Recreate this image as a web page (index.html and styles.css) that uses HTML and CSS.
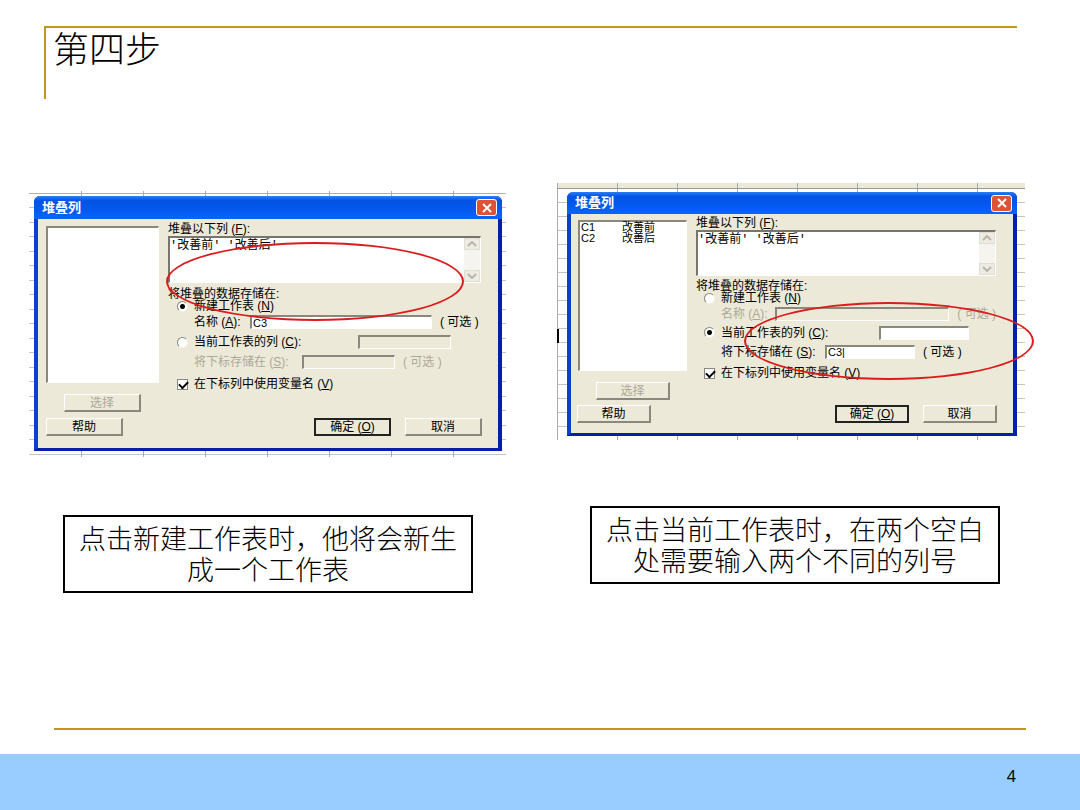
FILE: index.html
```html
<!doctype html>
<html lang="zh-CN">
<head>
    <meta charset="utf-8">
    <meta name="viewport" content="width=device-width, initial-scale=1.0">
    <title>第四步</title>
    <link rel="stylesheet" href="styles.css">
</head>
<body>

<div class="slide">
    <header class="slide-header">
        <h1>第四步</h1>
    </header>

    <main class="steps">
        <section class="step step-new">
            <div class="sheet">
                <form class="dialog">
                    <div class="titlebar">
                        <h2>堆叠列</h2>
                        <button type="button" class="close" aria-label="关闭">
                            <svg viewBox="0 0 12 12"><path d="M2 2l8 8M10 2l-8 8"/></svg>
                        </button>
                    </div>
                    <div class="body">
                        <div class="side">
                            <ul class="columns"></ul>
                            <button type="button" class="btn select" disabled>选择</button>
                        </div>
                        <div class="fields">
                            <label for="stack1">堆叠以下列 (<u>F</u>):</label>
                            <div class="memo">
                                <textarea id="stack1">'改善前' '改善后'</textarea>
                                <div class="scroll">
                                    <svg viewBox="0 0 10 6"><path d="M1 5l4-4 4 4"/></svg>
                                    <svg viewBox="0 0 10 6"><path d="M1 1l4 4 4-4"/></svg>
                                </div>
                            </div>
                            <p class="group">将堆叠的数据存储在:</p>
                            <div class="row row-first">
                                <input type="radio" name="target1" id="new1" checked>
                                <label for="new1">新建工作表 (<u>N</u>)</label>
                            </div>
                            <div class="row">
                                <label class="short" for="name1">名称 (<u>A</u>):</label>
                                <input type="text" class="wide" id="name1" value="C3">
                                <span class="optional">( 可选 )</span>
                            </div>
                            <div class="row">
                                <input type="radio" name="target1" id="current1">
                                <label class="long" for="current1">当前工作表的列 (<u>C</u>):</label>
                                <input type="text" aria-label="当前工作表的列" disabled>
                            </div>
                            <div class="row off">
                                <label class="medium" for="sub1">将下标存储在 (<u>S</u>):</label>
                                <input type="text" id="sub1" disabled>
                                <span class="optional">( 可选 )</span>
                            </div>
                            <div class="row row-last">
                                <input type="checkbox" id="vars1" checked>
                                <label for="vars1">在下标列中使用变量名 (<u>V</u>)</label>
                            </div>
                        </div>
                    </div>
                    <div class="actions">
                        <button type="button" class="btn help">帮助</button>
                        <button type="button" class="btn ok">确定 (<u>O</u>)</button>
                        <button type="button" class="btn">取消</button>
                    </div>
                </form>
                <div class="ring"></div>
            </div>
            <p class="caption">点击新建工作表时，他将会新生成一个工作表</p>
        </section>

        <section class="step step-current">
            <div class="sheet">
                <div class="cell"></div>
                <form class="dialog">
                    <div class="titlebar">
                        <h2>堆叠列</h2>
                        <button type="button" class="close" aria-label="关闭">
                            <svg viewBox="0 0 12 12"><path d="M2 2l8 8M10 2l-8 8"/></svg>
                        </button>
                    </div>
                    <div class="body">
                        <div class="side">
                            <ul class="columns">
                                <li><span>C1</span><span>改善前</span></li>
                                <li><span>C2</span><span>改善后</span></li>
                            </ul>
                            <button type="button" class="btn select" disabled>选择</button>
                        </div>
                        <div class="fields">
                            <label for="stack2">堆叠以下列 (<u>F</u>):</label>
                            <div class="memo">
                                <textarea id="stack2">'改善前' '改善后'</textarea>
                                <div class="scroll">
                                    <svg viewBox="0 0 10 6"><path d="M1 5l4-4 4 4"/></svg>
                                    <svg viewBox="0 0 10 6"><path d="M1 1l4 4 4-4"/></svg>
                                </div>
                            </div>
                            <p class="group">将堆叠的数据存储在:</p>
                            <div class="row row-first">
                                <input type="radio" name="target2" id="new2">
                                <label for="new2">新建工作表 (<u>N</u>)</label>
                            </div>
                            <div class="row off">
                                <label class="short" for="name2">名称 (<u>A</u>):</label>
                                <input type="text" class="wide" id="name2" disabled>
                                <span class="optional">( 可选 )</span>
                            </div>
                            <div class="row">
                                <input type="radio" name="target2" id="current2" checked>
                                <label class="long" for="current2">当前工作表的列 (<u>C</u>):</label>
                                <input type="text" aria-label="当前工作表的列">
                            </div>
                            <div class="row">
                                <label class="medium" for="sub2">将下标存储在 (<u>S</u>):</label>
                                <input type="text" id="sub2" value="C3|">
                                <span class="optional">( 可选 )</span>
                            </div>
                            <div class="row row-last">
                                <input type="checkbox" id="vars2" checked>
                                <label for="vars2">在下标列中使用变量名 (<u>V</u>)</label>
                            </div>
                        </div>
                    </div>
                    <div class="actions">
                        <button type="button" class="btn help">帮助</button>
                        <button type="button" class="btn ok">确定 (<u>O</u>)</button>
                        <button type="button" class="btn">取消</button>
                    </div>
                </form>
                <div class="ring"></div>
            </div>
            <p class="caption">点击当前工作表时，在两个空白处需要输入两个不同的列号</p>
        </section>
    </main>

    <hr class="rule">
    <footer class="slide-footer">4</footer>
</div>

</body>
</html>
```
FILE: styles.css
```css
* {
    box-sizing: border-box;
}

body {
    margin: 0;
    background: #fff;
    color: #000;
    font-family: "Liberation Sans", "Noto Sans CJK SC", sans-serif;
}

h1, h2, p, ul {
    margin: 0;
    padding: 0;
    font-weight: normal;
    list-style: none;
}

.slide {
    display: flex;
    flex-direction: column;
    min-height: 100vh;
}

.slide-header {
    height: 73px;
    margin: 26px 63px 0 44px;
    padding-left: 7px;
    border-top: 2px solid #c0981c;
    border-left: 2px solid #c0981c;
}

.slide-header h1 {
    font-size: 36px;
    font-weight: 300;
    line-height: 46px;
}

/* the two steps */
.steps {
    flex: 1;
    display: grid;
    grid-template-columns: 477fr 468fr;
    gap: 51px;
    align-items: start;
    padding: 84px 55px 0 29px;
}

.step {
    min-width: 0;
}

.step-new {
    --row: 20px;
    --head: 23px;
    --memo: 47px;
    --indent: 26px;
    --small: 93px;
    margin-top: 8px;
}

.step-current {
    --row: 19px;
    --head: 22px;
    --memo: 46px;
    --indent: 25px;
    --small: 90px;
}

.sheet {
    position: relative;
    padding: 5px 4px 6px 5px;
    background:
        linear-gradient(#b0b0a8, #b0b0a8) 0 2px / 100% 1px no-repeat,
        repeating-linear-gradient(90deg, transparent 0 52px, #aaa 52px 53px, transparent 53px 62px),
        repeating-linear-gradient(transparent 0 2px, #c4c4c4 2px 3px, transparent 3px 16px, #c4c4c4 16px 17px, transparent 17px 29px);
}

.step-current .sheet {
    padding: 9px 8px 4px 10px;
    background:
        linear-gradient(#999, #999) 0 5px / 100% 1px no-repeat,
        repeating-linear-gradient(90deg, #aaa 0 1px, transparent 1px 60px),
        linear-gradient(#ece9d8, #ece9d8) 0 0 / 100% 5px no-repeat,
        repeating-linear-gradient(transparent 0 5px, #c4c4c4 5px 6px, transparent 6px 14px);
}

.cell {
    position: absolute;
    left: 0;
    top: 146px;
    width: 2px;
    height: 14px;
    background: #000;
}

.ring {
    position: absolute;
    left: 137px;
    top: 51px;
    width: 298px;
    height: 79px;
    border: 2px solid #dc1c1c;
    border-radius: 50%;
    pointer-events: none;
}

.step-current .ring {
    left: 187px;
    top: 119px;
    width: 290px;
    height: 78px;
}

/* dialog */
.dialog {
    border: 4px solid #0c3fd0;
    border-top: 0;
    border-bottom-width: 3px;
    border-right-color: #0420a8;
    border-bottom-color: #0420a8;
    border-radius: 6px 6px 0 0;
    background: #ece9d8;
    font-size: 12px;
    line-height: 12px;
}

.titlebar {
    display: flex;
    align-items: center;
    justify-content: space-between;
    height: var(--head);
    margin: 0 -4px;
    padding: 0 5px 0 8px;
    border-radius: 6px 6px 0 0;
    background: linear-gradient(#2b7ff5, #0353e4 20%, #0458ee 60%, #0666ff);
}

.titlebar h2 {
    color: #fff;
    font-size: 13px;
    font-weight: bold;
    line-height: 16px;
}

.close {
    width: 21px;
    height: 17px;
    padding: 0;
    border: 1px solid #fff;
    border-radius: 3px;
    background: #dd5334;
    line-height: 0;
}

.close svg {
    width: 12px;
    height: 12px;
    fill: none;
    stroke: #fff;
    stroke-width: 2;
}

.body {
    display: flex;
    gap: 9px;
    padding: 4px 17px 0 8px;
}

.side {
    width: 113px;
    padding-top: 3px;
}

.columns {
    height: 157px;
    border: 1px solid #fff;
    border-top: 2px solid #8a887c;
    border-left: 2px solid #8a887c;
    background: #fff;
    font-size: 11px;
    line-height: 11px;
}

.columns li {
    display: grid;
    grid-template-columns: 41px 1fr;
    padding-left: 1px;
}

.fields {
    flex: 1;
    min-width: 0;
}

.fields > label {
    display: block;
    margin-bottom: 1px;
}

.memo {
    display: flex;
    height: var(--memo);
    border: 1px solid #fff;
    border-top: 2px solid #77756c;
    border-left: 2px solid #77756c;
    background: #fff;
}

.memo textarea {
    flex: 1;
    min-width: 0;
    padding: 0;
    border: 0;
    background: none;
    color: #000;
    font: 12px/16px "Liberation Mono", "Noto Sans CJK SC", monospace;
    resize: none;
    overflow: hidden;
}

.scroll {
    display: flex;
    flex-direction: column;
    justify-content: space-between;
    width: 16px;
    background: #f5f4ee;
}

.scroll svg {
    width: 16px;
    height: 12px;
    padding: 2px;
    border: 1px solid #e0ded2;
    background: #eeece2;
    fill: none;
    stroke: #b8b6aa;
    stroke-width: 2;
}

.group {
    margin-top: 5px;
}

.row {
    display: flex;
    align-items: center;
    height: var(--row);
    padding-left: var(--indent);
    white-space: nowrap;
}

.row-first {
    height: 12px;
}

.row-last {
    height: 24px;
}

.off {
    color: #aca899;
}

.short {
    width: 56px;
}

.medium {
    width: 108px;
}

.long {
    width: 164px;
}

.row input[type="text"] {
    width: var(--small);
    height: 14px;
    padding: 0 1px;
    border: 1px solid #fff;
    border-top: 2px solid #8a887c;
    border-left: 2px solid #8a887c;
    background: #fff;
    font: inherit;
    font-size: 11px;
}

.row .wide {
    flex: 0 1 182px;
    min-width: 0;
}

.row input[type="text"]:disabled {
    background: #ece9d8;
}

.optional {
    margin-left: 8px;
}

.row input[type="radio"],
.row input[type="checkbox"] {
    appearance: none;
    flex: none;
    width: 11px;
    height: 11px;
    margin: 0 6px 0 -17px;
    border: 1px solid #8a887c;
    background: #fff;
}

.row input[type="radio"] {
    border-right-color: #f4f2e8;
    border-bottom-color: #f4f2e8;
    border-radius: 50%;
}

.row input[type="radio"]:checked {
    background: radial-gradient(circle, #000 0 2px, #fff 3px);
}

/* tick made of two strokes */
.row input[type="checkbox"]:checked::before {
    content: "";
    display: block;
    width: 7px;
    height: 4px;
    margin: 1px;
    border: solid #000;
    border-width: 0 0 2px 2px;
    transform: rotate(-45deg);
}

.btn {
    width: 77px;
    height: 18px;
    padding: 0;
    border: 1px solid #fff;
    border-right: 2px solid #8a887c;
    border-bottom: 2px solid #8a887c;
    background: #ece9d8;
    color: #000;
    font: inherit;
    line-height: 14px;
}

.btn:disabled {
    color: #aca899;
}

.select {
    display: block;
    margin: 11px 0 0 18px;
}

.actions {
    display: flex;
    gap: 14px;
    padding: 6px 16px 12px 8px;
}

.help {
    margin-right: auto;
}

.ok {
    border: 2px solid #222;
}

.step-current .columns {
    height: 151px;
}

.step-current .side {
    width: 109px;
}

.step-current .body {
    padding: 3px 17px 0 7px;
}

.step-current .group {
    margin-top: 4px;
}

.step-current .btn {
    width: 74px;
}

.step-current .actions {
    padding: 5px 16px 10px 6px;
}

.step-current .short {
    width: 54px;
}

.step-current .medium {
    width: 104px;
}

.step-current .long {
    width: 158px;
}

.step-current .wide {
    flex-basis: 175px;
}

/* captions */
.caption {
    max-width: 410px;
    margin: 58px 0 0 34px;
    padding: 8px 14px 4px;
    border: 2px solid #000;
    font-size: 27px;
    font-weight: 300;
    line-height: 31px;
    text-align: center;
}

.step-current .caption {
    margin: 66px 0 0 33px;
}

.rule {
    width: auto;
    height: 2px;
    margin: 0 54px;
    border: 0;
    background: #c0981c;
}

.slide-footer {
    height: 56px;
    margin-top: 24px;
    padding: 11px 64px;
    background: #9cf;
    font-family: "Noto Sans", sans-serif;
    font-size: 16px;
    line-height: 22px;
    text-align: right;
}
```
